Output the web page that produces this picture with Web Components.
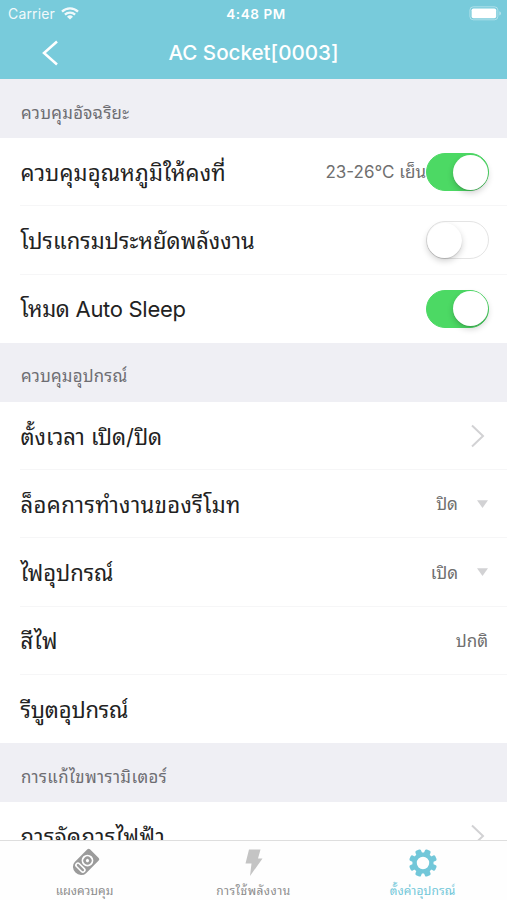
<!DOCTYPE html>
<html lang="th">
<head>
<meta charset="utf-8">
<meta name="viewport" content="width=device-width, initial-scale=1">
<title>AC Socket[0003]</title>
<style>
  body {
    margin: 0;
    height: 900px;
    overflow: hidden;
    background: #fff;
    font-family: Inter, "Noto Sans Thai Looped", Loma, Garuda, "Noto Sans", sans-serif;
  }
</style>
</head>
<body>
<app-screen>
  <nav-header slot="top" heading="AC Socket[0003]" carrier="Carrier" time="4:48 PM"></nav-header>

  <setting-group heading="ควบคุมอัจฉริยะ" style="--track: .3px">
    <setting-row label="ควบคุมอุณหภูมิให้คงที่" value="23-26°C เย็น" style="--track: .15px"><toggle-switch on></toggle-switch></setting-row>
    <setting-row label="โปรแกรมประหยัดพลังงาน" style="--track: .05px"><toggle-switch></toggle-switch></setting-row>
    <setting-row label="โหมด Auto Sleep" style="--track: -.3px"><toggle-switch on></toggle-switch></setting-row>
  </setting-group>

  <setting-group heading="ควบคุมอุปกรณ์" style="--track: .2px">
    <setting-row label="ตั้งเวลา เปิด/ปิด" style="--track: -.05px"><row-mark kind="chevron"></row-mark></setting-row>
    <setting-row label="ล็อคการทำงานของรีโมท" value="ปิด" style="--track: .4px"><row-mark kind="drop"></row-mark></setting-row>
    <setting-row label="ไฟอุปกรณ์" value="เปิด" style="--track: -.05px"><row-mark kind="drop"></row-mark></setting-row>
    <setting-row label="สีไฟ" value="ปกติ" style="--track: .8px"></setting-row>
    <setting-row label="รีบูตอุปกรณ์" style="--track: -.15px"></setting-row>
  </setting-group>

  <setting-group heading="การแก้ไขพารามิเตอร์" style="--track: .4px">
    <setting-row label="การจัดการไฟฟ้า" style="--track: .45px"><row-mark kind="chevron"></row-mark></setting-row>
  </setting-group>

  <tab-bar slot="bottom">
    <tab-item icon="remote" label="แผงควบคุม"></tab-item>
    <tab-item icon="bolt" label="การใช้พลังงาน" style="--track: .45px"></tab-item>
    <tab-item icon="gear" label="ตั้งค่าอุปกรณ์" style="--track: .1px" active></tab-item>
  </tab-bar>
</app-screen>

<script>
class AppScreen extends HTMLElement {
  constructor() {
    super();
    this.attachShadow({ mode: 'open' }).innerHTML = `
      <style>
        :host {
          display: flex;
          flex-direction: column;
          height: 900px;
          overflow: hidden;
        }
        main {
          flex: 1;
          min-height: 0;
          overflow: hidden;
        }
      </style>
      <slot name="top"></slot>
      <main><slot></slot></main>
      <slot name="bottom"></slot>
    `;
  }
}

class NavHeader extends HTMLElement {
  connectedCallback() {
    this.attachShadow({ mode: 'open' }).innerHTML = `
      <style>
        :host {
          display: block;
          flex: none;
          height: 79px;
          background: #78cbdb;
          color: #fff;
        }
        .status, .bar {
          display: grid;
          grid-template-columns: 1fr auto 1fr;
          align-items: center;
        }
        .status {
          height: 27px;
          padding: 0 5px 0 8px;
          font-size: 14px;
        }
        .carrier {
          display: flex;
          align-items: center;
          gap: 6px;
          letter-spacing: .15px;
          opacity: .9;
        }
        .time {
          padding-left: 2px;
          font-weight: 600;
          font-size: 13.5px;
          letter-spacing: .55px;
        }
        .battery {
          justify-self: end;
        }
        .bar {
          height: 51px;
        }
        .back {
          margin-left: 41px;
        }
        h1 {
          margin: 0;
          font-size: 20.6px;
          line-height: 24px;
          font-weight: 500;
        }
        svg {
          display: block;
        }
      </style>
      <div class="status">
        <span class="carrier">
          <span>${this.getAttribute('carrier')}</span>
          <svg width="18" height="13" viewBox="0 0 18 13" fill="none" stroke="#fff" stroke-width="2.3">
            <path d="M1 4.6a11.6 11.6 0 0 1 16 0"/>
            <path d="M3.9 7.7a7.4 7.4 0 0 1 10.2 0"/>
            <path d="M9 12.6L6 9.8a4.3 4.3 0 0 1 6 0z" fill="#fff" stroke="none"/>
          </svg>
        </span>
        <span class="time">${this.getAttribute('time')}</span>
        <svg class="battery" width="33" height="15" viewBox="0 0 33 15">
          <rect x=".9" y=".8" width="28" height="13" rx="3.4" fill="none" stroke="#fff" stroke-opacity=".4" stroke-width="1"/>
          <rect x="2.6" y="2.4" width="24.6" height="9.8" rx="1.8" fill="#fff"/>
          <path d="M30.3 5.2q1.7.6 1.7 2.2t-1.7 2.2z" fill="#fff" fill-opacity=".45"/>
        </svg>
      </div>
      <div class="bar">
        <svg class="back" width="18" height="26" viewBox="0 0 18 26" fill="none" stroke="#fff" stroke-width="2.5">
          <path d="M16 1.5L3 13l13 11.5"/>
        </svg>
        <h1>${this.getAttribute('heading')}</h1>
      </div>
    `;
  }
}

class SettingGroup extends HTMLElement {
  connectedCallback() {
    this.attachShadow({ mode: 'open' }).innerHTML = `
      <style>
        :host {
          display: block;
        }
        h2 {
          display: flex;
          align-items: center;
          box-sizing: border-box;
          height: 59px;
          margin: 0;
          padding: 5px 21px 0;
          background: #efeff4;
          color: #6d6d72;
          font-size: 16.8px;
          font-weight: 400;
          letter-spacing: var(--track, 0);
          white-space: nowrap;
        }
      </style>
      <h2><span>${this.getAttribute('heading')}</span></h2>
      <slot></slot>
    `;
  }
}

class SettingRow extends HTMLElement {
  connectedCallback() {
    const value = this.getAttribute('value');

    this.attachShadow({ mode: 'open' }).innerHTML = `
      <style>
        :host {
          display: block;
          height: 68.3px;
          padding-left: 20px;
          background: #fff;
        }
        .row {
          display: flex;
          align-items: center;
          box-sizing: border-box;
          height: 100%;
          padding-right: 18px;
          border-bottom: 1px solid #f6f6f7;
          white-space: nowrap;
        }
        :host(:last-of-type) .row {
          border-bottom-color: transparent;
        }
        .label {
          flex: 1;
          padding: 0 0 2px .5px;
          color: #222;
          font-size: 22px;
          letter-spacing: var(--track, 0);
        }
        .value {
          padding-bottom: 2px;
          color: #6f6f6f;
          font-size: 17px;
        }
        .value:last-of-type {
          margin-right: 1px;
        }
        ::slotted(*) {
          margin-left: -1px;
        }
      </style>
      <div class="row">
        <span class="label">${this.getAttribute('label')}</span>
        ${value ? `<span class="value">${value}</span>` : ''}
        <slot></slot>
      </div>
    `;
  }
}

class ToggleSwitch extends HTMLElement {
  connectedCallback() {
    this.attachShadow({ mode: 'open' }).innerHTML = `
      <style>
        :host {
          display: flex;
          align-items: center;
          box-sizing: border-box;
          width: 63px;
          height: 38px;
          margin-top: 1px;
          border: 1.5px solid #e4e4e4;
          border-radius: 19px;
          background: #fff;
        }
        :host([on]) {
          justify-content: flex-end;
          padding-right: .5px;
          border-color: #4cd964;
          background: #4cd964;
        }
        i {
          width: 35px;
          height: 35px;
          border-radius: 50%;
          background: #fff;
          box-shadow: 0 3px 6px rgba(0, 0, 0, .18), 0 1px 1px rgba(0, 0, 0, .12);
        }
      </style>
      <i></i>
    `;
  }
}

class RowMark extends HTMLElement {
  connectedCallback() {
    const marks = {
      chevron: `<svg width="16" height="24" viewBox="0 0 16 24" fill="none" stroke="#d2d2d4" stroke-width="2">
        <path d="M2 1.5L13 12 2 22.5"/>
      </svg>`,
      drop: `<svg width="11" height="8" viewBox="0 0 11 8"><path d="M0 .3h11L5.5 8z" fill="#d2d2d4"/></svg>`
    };

    this.attachShadow({ mode: 'open' }).innerHTML = `
      <style>
        :host {
          display: block;
          padding-right: 3px;
        }
        :host([kind="drop"]) {
          padding: 0 1px 0 19px;
        }
        svg {
          display: block;
        }
      </style>
      ${marks[this.getAttribute('kind')]}
    `;
  }
}

class TabBar extends HTMLElement {
  constructor() {
    super();
    this.attachShadow({ mode: 'open' }).innerHTML = `
      <style>
        :host {
          display: grid;
          grid-template-columns: repeat(3, 1fr);
          flex: none;
          box-sizing: border-box;
          height: 60px;
          border-top: 1px solid #dedede;
          background: #fefefe;
        }
      </style>
      <slot></slot>
    `;
  }
}

class TabItem extends HTMLElement {
  connectedCallback() {
    // Eight flared teeth round the hub
    const teeth = [0, 45, 90, 135, 180, 225, 270, 315]
      .map((a) => `<path d="M9.8 6Q11.6 4 11 1.8q-.2-1.5 1.4-1.8h3.2q1.6.3 1.4 1.8-.6 2.2 1.2 4.2z" transform="rotate(${a + 22.5} 14 14)"/>`)
      .join('');

    const icons = {
      remote: `<g transform="rotate(45 14 14)">
          <path d="M6 2.6Q6 .8 7.800 .8h12.400q1.800 0 1.800 1.800V20.500a8 7 0 0 1-16 0z" fill="#9b9b9b"/>
          <circle cx="14" cy="10.500" r="5" fill="none" stroke="#fefefe" stroke-width="1.800"/>
          <circle cx="14" cy="10.500" r="1.600" fill="#fefefe"/>
          <rect x="8.500" y="18.500" width="11" height="4" rx="2" fill="none" stroke="#fefefe" stroke-width="1.600"/>
        </g>`,
      bolt: `<path d="M9 .5h11.500l-2.500 9h4.500L10 27l1.500-12.500H5.500z" fill="#c4c4c4"/>`,
      gear: `<g fill="#72c7d9">${teeth}<circle cx="14" cy="14" r="8.4" fill="none" stroke="#72c7d9" stroke-width="4.4"/></g>`
    };

    this.attachShadow({ mode: 'open' }).innerHTML = `
      <style>
        :host {
          display: flex;
          flex-direction: column;
          align-items: center;
          gap: 4px;
          padding-top: 8px;
          color: #8c8c8c;
          font-size: 12px;
          line-height: 20px;
          letter-spacing: var(--track, 0);
          white-space: nowrap;
        }
        :host([active]) {
          color: #72c7d9;
        }
        svg {
          display: block;
          overflow: visible;
        }
      </style>
      <svg width="28" height="28" viewBox="0 0 28 28">${icons[this.getAttribute('icon')]}</svg>
      <span>${this.getAttribute('label')}</span>
    `;
  }
}

customElements.define('app-screen', AppScreen);
customElements.define('nav-header', NavHeader);
customElements.define('setting-group', SettingGroup);
customElements.define('setting-row', SettingRow);
customElements.define('toggle-switch', ToggleSwitch);
customElements.define('row-mark', RowMark);
customElements.define('tab-bar', TabBar);
customElements.define('tab-item', TabItem);
</script>
</body>
</html>
